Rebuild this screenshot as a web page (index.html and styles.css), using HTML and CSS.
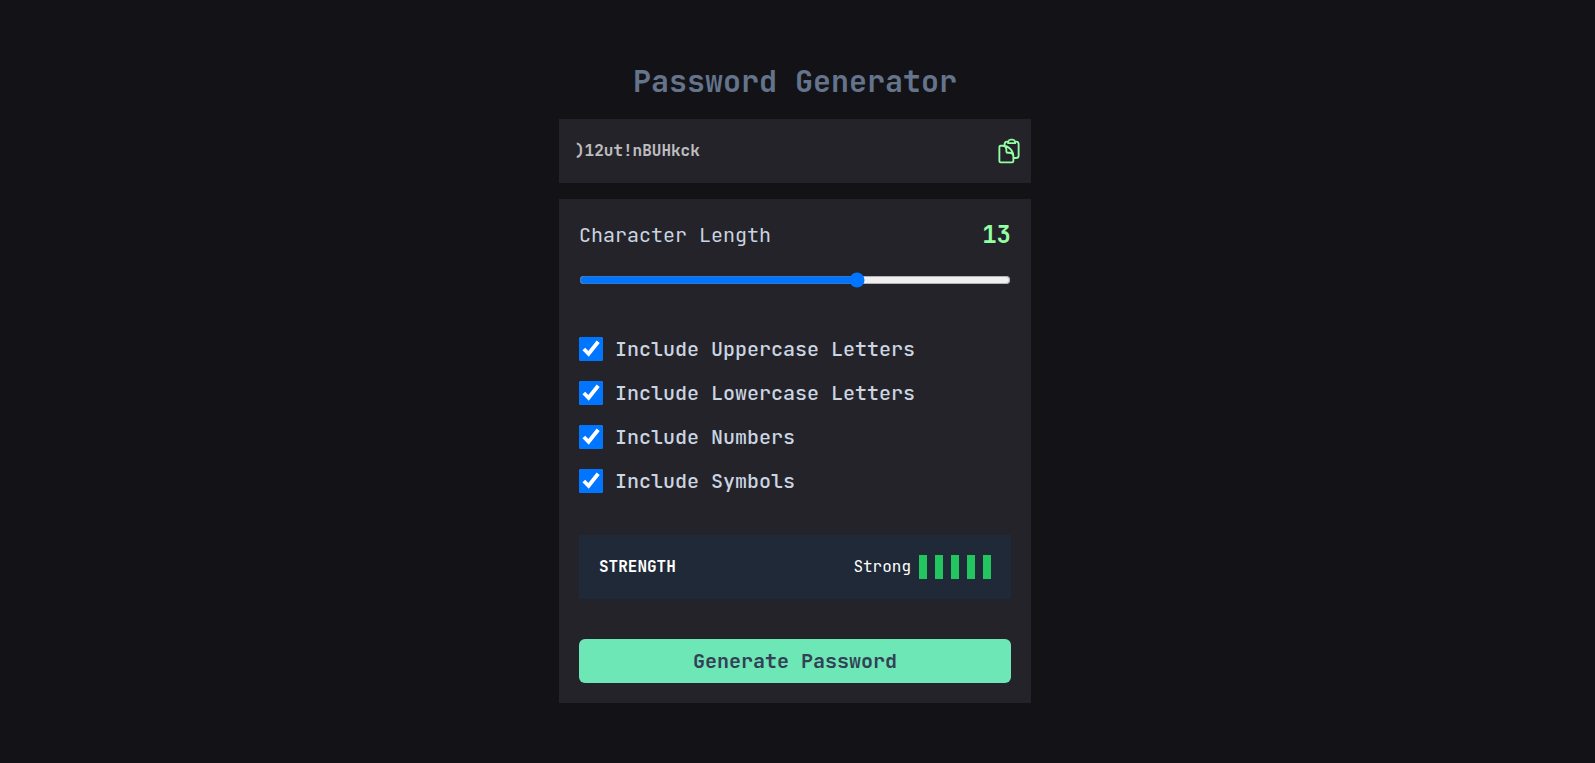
FILE: index.html
```html
<!DOCTYPE html>
<html lang="en">
<head>
<meta charset="utf-8">
<title>Password Generator</title>
<link rel="stylesheet" href="styles.css">
</head>
<body>
<main class="generator">
  <h1 class="title">Password Generator</h1>
  <section class="output">
    <span class="password">)12ut!nBUHkck</span>
    <svg class="copy-icon" viewBox="0 0 24 24" fill="none" stroke="currentColor" stroke-width="1.6" stroke-linecap="round" stroke-linejoin="round"><path d="M8.25 7.5V6.108c0-1.135.845-2.098 1.976-2.192.373-.03.748-.057 1.123-.08M15.75 18H18a2.25 2.25 0 002.25-2.25V6.108c0-1.135-.845-2.098-1.976-2.192a48.424 48.424 0 00-1.123-.08M15.75 18.75v-1.875a3.375 3.375 0 00-3.375-3.375h-1.5a1.125 1.125 0 01-1.125-1.125v-1.5A3.375 3.375 0 006.375 7.5H5.25m11.9-3.664A2.251 2.251 0 0015 2.25h-1.5a2.251 2.251 0 00-2.15 1.586m5.8 0c.065.21.1.433.1.664v.75h-6V4.5c0-.231.035-.454.1-.664M6.75 7.5H4.875c-.621 0-1.125.504-1.125 1.125v12c0 .621.504 1.125 1.125 1.125h9.75c.621 0 1.125-.504 1.125-1.125V16.5a9 9 0 00-9-9z"/></svg>
  </section>
  <section class="panel">
    <div class="length">
      <label for="length">Character Length</label>
      <span class="length-value">13</span>
    </div>
    <input class="slider" id="length" type="range" min="0" max="20" value="13">
    <div class="options">
      <label class="option"><input class="check" type="checkbox" checked><span>Include Uppercase Letters</span></label>
      <label class="option"><input class="check" type="checkbox" checked><span>Include Lowercase Letters</span></label>
      <label class="option"><input class="check" type="checkbox" checked><span>Include Numbers</span></label>
      <label class="option"><input class="check" type="checkbox" checked><span>Include Symbols</span></label>
    </div>
    <div class="strength">
      <span class="strength-label">STRENGTH</span>
      <div class="meter">
        <span>Strong</span>
        <i class="bar"></i><i class="bar"></i><i class="bar"></i><i class="bar"></i><i class="bar"></i>
      </div>
    </div>
    <button class="generate" type="button">Generate Password</button>
  </section>
</main>
</body>
</html>
```

FILE: styles.css
```css
* { box-sizing: border-box; }

body {
  margin: 0;
  min-height: 100vh;
  padding: 63px 5px 0 0;
  background: #131217;
  color: #cbd5e1;
  font-family: "JetBrains Mono", "DejaVu Sans Mono", monospace;
  font-size: 20px;
  line-height: 28px;
}

.generator { width: 472px; margin: 0 auto; }

.title {
  margin: 0 0 20px;
  color: #64748b;
  font-size: 30px;
  font-weight: 600;
  line-height: 36px;
  text-align: center;
}

.output {
  display: flex;
  align-items: center;
  justify-content: space-between;
  height: 64px;
  margin-bottom: 16px;
  padding: 0 8px 0 16px;
  background: #24232a;
}

.password { color: #fff; opacity: 0.7; font-size: 16px; font-weight: 700; line-height: 24px; }

.copy-icon { width: 28px; height: 28px; color: #93ffa2; }

.panel {
  display: flex;
  flex-direction: column;
  height: 504px;
  padding: 20px;
  background: #24232a;
}

.length { display: flex; align-items: center; justify-content: space-between; height: 32px; }

.length-value { color: #93ffa2; font-size: 24px; font-weight: 700; line-height: 32px; }

.slider { width: 100%; height: 16px; margin: 21px 0 49px; accent-color: #0075ff; }

.options { display: grid; gap: 20px; }

.option { display: flex; align-items: center; gap: 12px; height: 24px; font-weight: 500; }

.check { width: 24px; height: 24px; margin: 0; accent-color: #0075ff; }

.strength {
  display: flex;
  align-items: center;
  justify-content: space-between;
  height: 64px;
  margin: 42px 0 40px;
  padding: 0 20px;
  background: #1f2937;
  color: #fff;
  font-size: 16px;
  line-height: 24px;
}

.strength-label { font-weight: 700; }

.meter { display: flex; align-items: center; gap: 8px; }

.bar { width: 8px; height: 24px; background: #22c55e; }

.generate {
  height: 44px;
  padding: 0;
  border: 0;
  border-radius: 6px;
  background: #6ee7b7;
  color: #334155;
  font: 600 20px/28px "JetBrains Mono", "DejaVu Sans Mono", monospace;
}
```
